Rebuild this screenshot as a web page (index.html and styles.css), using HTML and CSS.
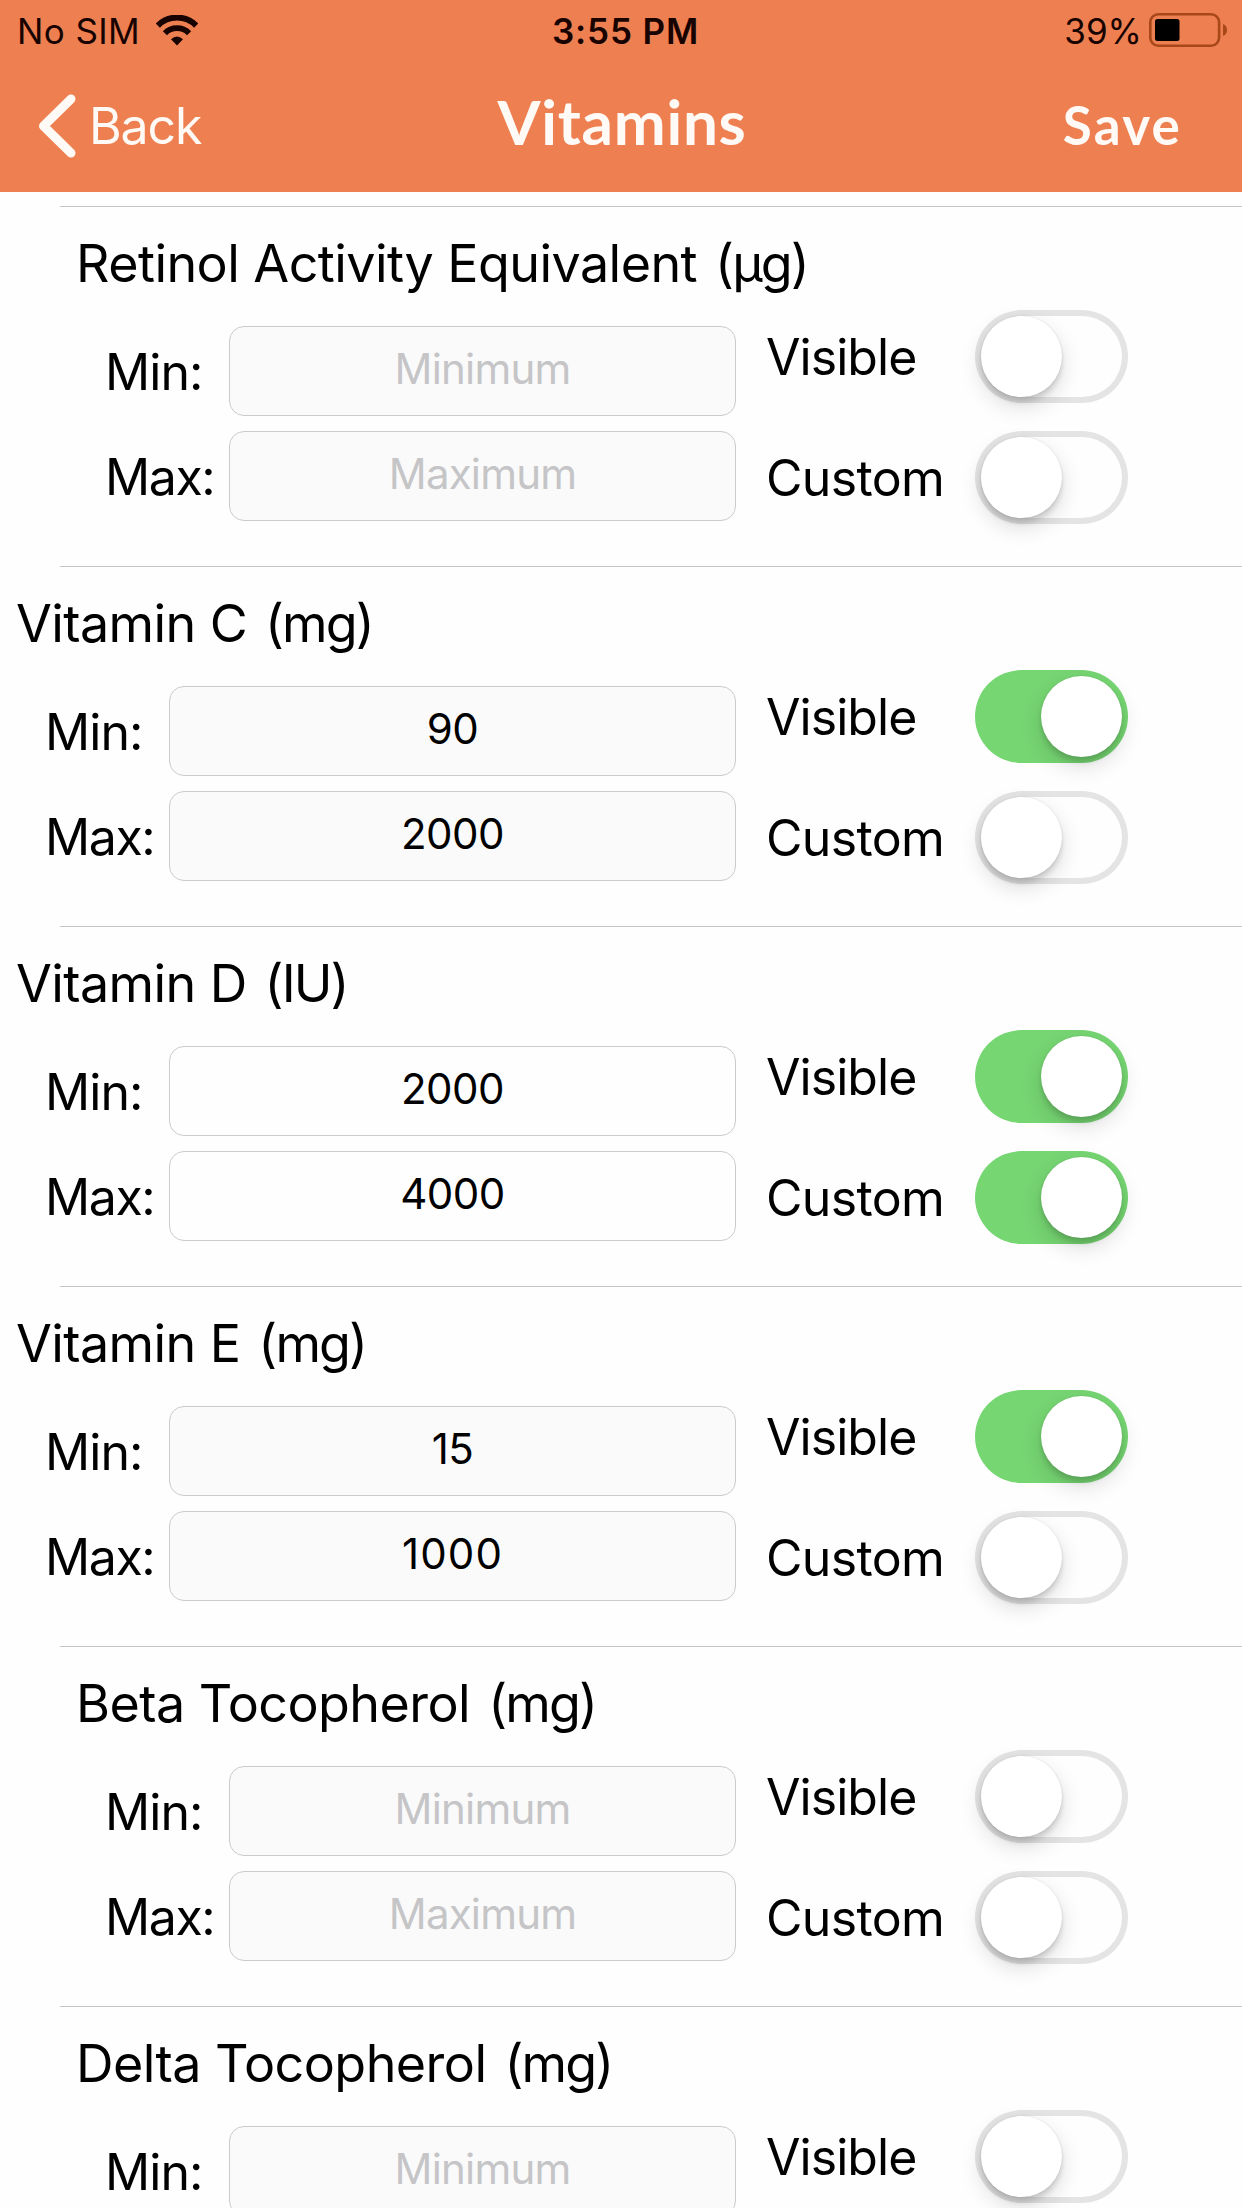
FILE: index.html
```html
<!DOCTYPE html>
<html lang="en">
<head>
<meta charset="utf-8">
<title>Vitamins</title>
<link rel="stylesheet" href="styles.css">
</head>
<body>
<header class="header">
  <div class="status">
    <div class="status-left">
      <span class="carrier">No SIM</span>
      <svg class="wifi" width="42" height="31" viewBox="0 0 42 31" fill="none">
        <path d="M1.8 10.6A27 27 0 0 1 40.2 10.6" stroke="#180300" stroke-width="6"/>
        <path d="M8.9 18.2A17 17 0 0 1 33.1 18.2" stroke="#180300" stroke-width="5.8"/>
        <path d="M15 24.2Q21 18.8 27 24.2L21 30.4Z" fill="#180300"/>
      </svg>
    </div>
    <span class="time">3:55 PM</span>
    <div class="status-right">
      <span class="percent">39%</span>
      <svg class="battery" width="78" height="34" viewBox="0 0 78 34">
        <rect x="1.3" y="1.3" width="68.8" height="31.4" rx="8" fill="none" stroke="#a8481a" stroke-width="2.6"/>
        <rect x="6" y="6" width="24.5" height="22" rx="2.5" fill="#000"/>
        <path d="M74 11Q78 12.5 78 17T74 23Z" fill="#a8481a"/>
      </svg>
    </div>
  </div>
  <nav class="nav">
    <a class="back">
      <svg width="38" height="64" viewBox="0 0 38 64" fill="none">
        <path d="M33 5L5.5 32L33 59" stroke="#fffaf5" stroke-width="9" stroke-linecap="round" stroke-linejoin="round"/>
      </svg>
      <span>Back</span>
    </a>
    <h1 class="nav-title">Vitamins</h1>
    <a class="save">Save</a>
  </nav>
</header>
<main class="list">
  <section class="row nested">
    <h2 class="name">Retinol Activity Equivalent <span class="unit">(μg)</span></h2>
    <div class="body">
      <div class="fields">
        <div class="field"><span class="label">Min:</span><div class="input disabled placeholder">Minimum</div></div>
        <div class="field"><span class="label max">Max:</span><div class="input disabled placeholder">Maximum</div></div>
      </div>
      <div class="options">
        <div class="option"><span class="option-label visible">Visible</span><span class="switch"></span></div>
        <div class="option"><span class="option-label">Custom</span><span class="switch"></span></div>
      </div>
    </div>
  </section>
  <section class="row">
    <h2 class="name">Vitamin C <span class="unit">(mg)</span></h2>
    <div class="body">
      <div class="fields">
        <div class="field"><span class="label">Min:</span><div class="input disabled">90</div></div>
        <div class="field"><span class="label max">Max:</span><div class="input disabled">2000</div></div>
      </div>
      <div class="options">
        <div class="option"><span class="option-label visible">Visible</span><span class="switch on"></span></div>
        <div class="option"><span class="option-label">Custom</span><span class="switch"></span></div>
      </div>
    </div>
  </section>
  <section class="row">
    <h2 class="name">Vitamin D <span class="unit">(IU)</span></h2>
    <div class="body">
      <div class="fields">
        <div class="field"><span class="label">Min:</span><div class="input">2000</div></div>
        <div class="field"><span class="label max">Max:</span><div class="input">4000</div></div>
      </div>
      <div class="options">
        <div class="option"><span class="option-label visible">Visible</span><span class="switch on"></span></div>
        <div class="option"><span class="option-label">Custom</span><span class="switch on"></span></div>
      </div>
    </div>
  </section>
  <section class="row">
    <h2 class="name">Vitamin E <span class="unit">(mg)</span></h2>
    <div class="body">
      <div class="fields">
        <div class="field"><span class="label">Min:</span><div class="input disabled">15</div></div>
        <div class="field"><span class="label max">Max:</span><div class="input disabled wide">1000</div></div>
      </div>
      <div class="options">
        <div class="option"><span class="option-label visible">Visible</span><span class="switch on"></span></div>
        <div class="option"><span class="option-label">Custom</span><span class="switch"></span></div>
      </div>
    </div>
  </section>
  <section class="row nested">
    <h2 class="name">Beta Tocopherol <span class="unit">(mg)</span></h2>
    <div class="body">
      <div class="fields">
        <div class="field"><span class="label">Min:</span><div class="input disabled placeholder">Minimum</div></div>
        <div class="field"><span class="label max">Max:</span><div class="input disabled placeholder">Maximum</div></div>
      </div>
      <div class="options">
        <div class="option"><span class="option-label visible">Visible</span><span class="switch"></span></div>
        <div class="option"><span class="option-label">Custom</span><span class="switch"></span></div>
      </div>
    </div>
  </section>
  <section class="row nested">
    <h2 class="name">Delta Tocopherol <span class="unit">(mg)</span></h2>
    <div class="body">
      <div class="fields">
        <div class="field"><span class="label">Min:</span><div class="input disabled placeholder">Minimum</div></div>
      </div>
      <div class="options">
        <div class="option"><span class="option-label visible">Visible</span><span class="switch"></span></div>
      </div>
    </div>
  </section>
</main>
</body>
</html>
```
FILE: styles.css
```css
* {
  box-sizing: border-box;
}

body {
  margin: 0;
  width: 1242px;
  height: 2208px;
  overflow: hidden;
  display: flex;
  flex-direction: column;
  background: #fefefe;
  color: #000;
  font-family: Inter, "Liberation Sans", sans-serif;
}

/* Header */
.header {
  flex: none;
  height: 192px;
  background: #ee7f50;
}

.status {
  display: grid;
  grid-template-columns: 1fr auto 1fr;
  align-items: center;
  height: 62px;
  padding: 0 15px 0 17px;
  font-size: 35px;
  line-height: 62px;
  color: #180300;
}

.status-left,
.status-right {
  display: flex;
  align-items: center;
}

.status-left {
  gap: 16px;
}

.carrier {
  letter-spacing: 0.4px;
}

.wifi {
  margin-bottom: 2px;
}

.time {
  font-weight: 600;
  letter-spacing: 0.85px;
  padding-left: 7px;
}

.status-right {
  justify-content: flex-end;
  gap: 7px;
}

.battery {
  margin-bottom: 2px;
}

.nav {
  display: grid;
  grid-template-columns: 1fr auto 1fr;
  align-items: center;
  height: 127px;
  padding: 0 60px 0 38px;
  color: #fffaf5;
}

.back {
  display: flex;
  align-items: center;
  gap: 13px;
  padding-top: 1px;
  font-size: 50px;
  line-height: 64px;
  letter-spacing: -1.1px;
}

.nav-title {
  margin: 0;
  padding: 0 0 10px 24px;
  font: 700 62px/74px Lato, "Open Sans", sans-serif;
  letter-spacing: 0.75px;
}

.save {
  justify-self: end;
  padding-bottom: 2px;
  font: 700 53px/64px Lato, "Open Sans", sans-serif;
  letter-spacing: 2.2px;
}

/* Nutrient list */
.list {
  padding-top: 14px;
  overflow: hidden;
}

.row {
  height: 360px;
}

.row::before {
  content: "";
  display: block;
  height: 1px;
  margin-left: 60px;
  background: #c6c6c6;
}

.name {
  margin: 0;
  padding: 27px 0 0 16px;
  font-size: 52px;
  font-weight: 400;
  line-height: 60px;
  letter-spacing: -0.6px;
  font-feature-settings: "calt" 0;
}

.nested .name {
  padding-left: 76px;
  letter-spacing: -0.55px;
}

.unit {
  margin-left: 4px;
  letter-spacing: -1.9px;
}

.body {
  display: flex;
  align-items: flex-start;
  gap: 30px;
}

.fields {
  display: flex;
  flex-direction: column;
  gap: 15px;
  width: 736px;
  padding: 32px 0 0 45px;
}

.nested .fields {
  padding-left: 105px;
}

.field {
  display: flex;
  height: 90px;
}

.label {
  flex: none;
  width: 124px;
  font-size: 50px;
  line-height: 92px;
  letter-spacing: -0.9px;
  font-feature-settings: "calt" 0;
}

.label.max {
  letter-spacing: -1.4px;
}

.input {
  flex: 1;
  border: 1px solid #cbcbcb;
  border-radius: 15px;
  background: #fefefe;
  font-size: 42px;
  line-height: 84px;
  text-align: center;
  letter-spacing: -0.5px;
}

.input.disabled {
  background: #fafafa;
}

.input.placeholder {
  color: #c5c5c7;
  letter-spacing: -0.8px;
}

.input.wide {
  letter-spacing: 1.1px;
}

.options {
  display: flex;
  flex-direction: column;
  gap: 28px;
  padding-top: 16px;
}

.option {
  display: flex;
  align-items: center;
  height: 93px;
}

.option-label {
  width: 209px;
  padding-top: 1px;
  font-size: 50px;
  line-height: 93px;
  letter-spacing: -0.65px;
}

.option-label.visible {
  letter-spacing: -0.95px;
}

.switch {
  display: flex;
  width: 153px;
  height: 93px;
  padding: 6px;
  border-radius: 47px;
  box-shadow: inset 0 0 0 6px #e4e4e4;
}

.switch::before {
  content: "";
  width: 81px;
  height: 81px;
  border-radius: 50%;
  background: #fff;
  box-shadow: 0 9px 22px rgba(0, 0, 0, 0.14), 0 5px 5px rgba(0, 0, 0, 0.12), 0 0 2px rgba(0, 0, 0, 0.12);
}

.switch.on {
  justify-content: flex-end;
  background: #76d672;
  box-shadow: none;
}
```
